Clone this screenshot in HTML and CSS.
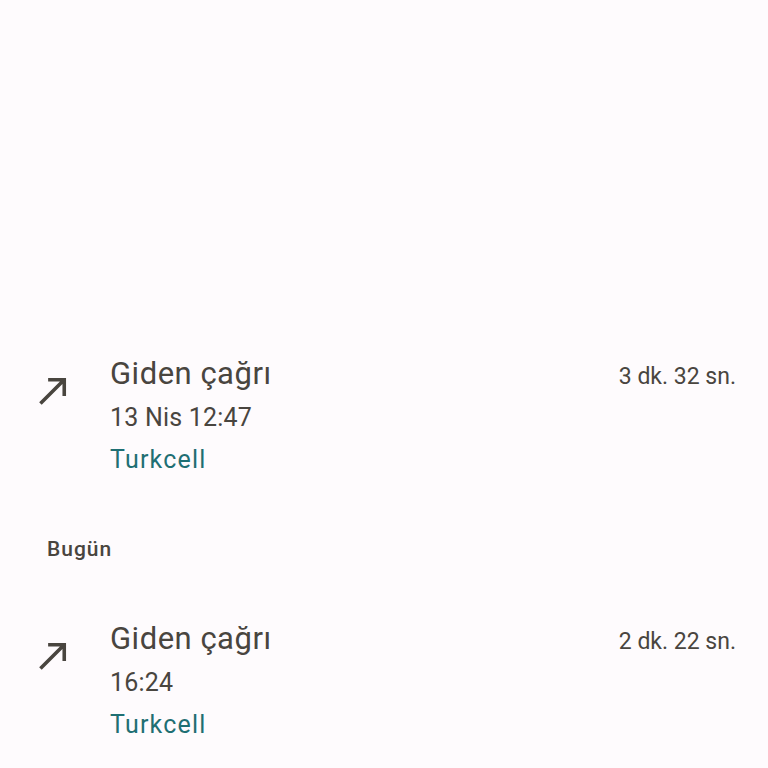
FILE: index.html
```html
<!DOCTYPE html>
<html lang="tr">
  <head>
    <meta charset="UTF-8" />
    <meta name="viewport" content="width=device-width, initial-scale=1.0" />
    <title>Arama geçmişi</title>
    <link rel="stylesheet" href="styles.css">
  </head>
  <body>
    <main class="history">
      <div class="call">
        <div class="call-icon">
          <svg viewBox="0 0 24 24" width="43" height="43">
            <path d="M9 5v2h6.59L4 18.59 5.41 20 17 8.41V15h2V5z" />
          </svg>
        </div>
        <div class="call-info">
          <div class="call-type">Giden çağrı</div>
          <div class="call-time">13 Nis 12:47</div>
          <div class="call-sim">Turkcell</div>
        </div>
        <div class="call-duration">3 dk. 32 sn.</div>
      </div>

      <h2 class="day">Bugün</h2>

      <div class="call">
        <div class="call-icon">
          <svg viewBox="0 0 24 24" width="43" height="43">
            <path d="M9 5v2h6.59L4 18.59 5.41 20 17 8.41V15h2V5z" />
          </svg>
        </div>
        <div class="call-info">
          <div class="call-type">Giden çağrı</div>
          <div class="call-time">16:24</div>
          <div class="call-sim">Turkcell</div>
        </div>
        <div class="call-duration">2 dk. 22 sn.</div>
      </div>
    </main>
  </body>
</html>
```

FILE: styles.css
```css
body {
  margin: 0;
  background: #fefbfd;
  font-family: Roboto, "Noto Sans", sans-serif;
  color: #49453f;
}

.history {
  padding-top: 354px;
}

.call {
  display: flex;
  align-items: flex-start;
  padding: 0 32px 0 32px;
}

.call-icon {
  margin-top: 15px;
  width: 43px;
  height: 43px;
  margin-right: 35px;
}

.call-icon svg {
  display: block;
  fill: #49453f;
}

.call-info {
  flex: 1;
}

.call-type {
  font-size: 31px;
  line-height: 40px;
  letter-spacing: 0.5px;
}

.call-time {
  font-size: 25px;
  line-height: 42px;
  letter-spacing: 0.2px;
  margin-top: 3px;
}

.call-sim {
  font-size: 25px;
  line-height: 42px;
  letter-spacing: 1.2px;
  color: #1f6f73;
}

.call-duration {
  font-size: 23px;
  line-height: 40px;
  padding-top: 3px;
}

.day {
  margin: 54px 0 56px 47px;
  font-size: 21px;
  line-height: 28px;
  font-weight: 500;
  letter-spacing: 1px;
}
```
